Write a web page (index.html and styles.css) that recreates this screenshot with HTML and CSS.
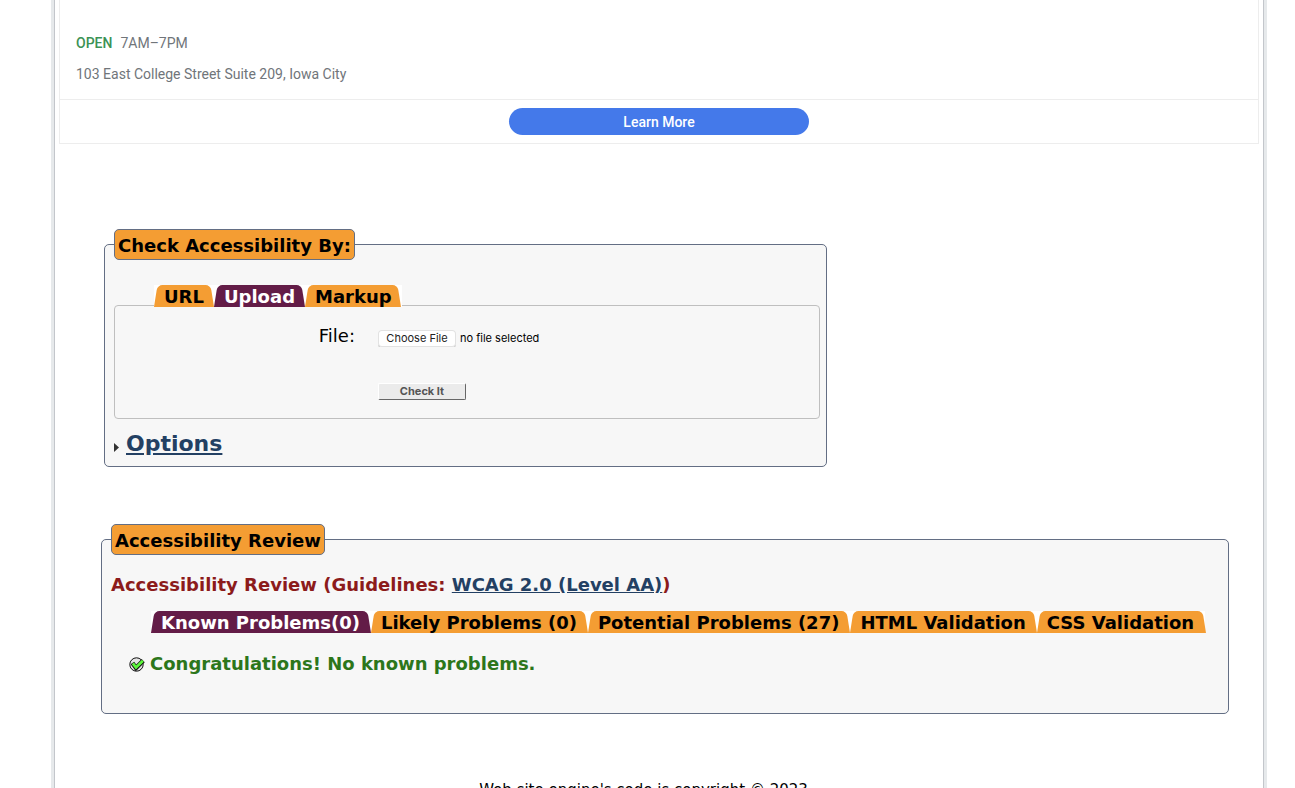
FILE: index.html
```html
<!DOCTYPE html>
<html lang="en">
<head>
<meta charset="utf-8">
<title>Web Accessibility Checker</title>
<link rel="stylesheet" href="styles.css">
</head>
<body>
<div class="sheet">
  <aside class="promo">
    <div class="promo-info">
      <p class="promo-hours"><strong class="open">OPEN</strong><span>7AM–7PM</span></p>
      <p class="promo-address">103 East College Street Suite 209, Iowa City</p>
    </div>
    <div class="promo-action">
      <a class="learn" href="#">Learn More</a>
    </div>
  </aside>

  <main>
    <form class="check">
      <fieldset class="group">
        <legend class="group-title">Check Accessibility By:</legend>
        <div class="tabs check-tabs">
          <button type="button" class="tab">URL</button>
          <button type="button" class="tab active">Upload</button>
          <button type="button" class="tab">Markup</button>
        </div>
        <div class="panel">
          <label class="file-label" for="file">File:</label>
          <div class="file-row">
            <input id="file" class="file" type="file">
            <span class="file-name">no file selected</span>
          </div>
          <button type="button" class="submit" disabled>Check It</button>
        </div>
        <div class="options">
          <svg class="arrow" viewBox="0 0 5 9" aria-hidden="true"><path d="M0 0 5 4.5 0 9z" fill="#333"/></svg>
          <a href="#">Options</a>
        </div>
      </fieldset>
    </form>

    <section class="review">
      <fieldset class="group">
        <legend class="group-title">Accessibility Review</legend>
        <h2 class="guidelines">Accessibility Review (Guidelines: <a href="#">WCAG 2.0 (Level AA)</a>)</h2>
        <div class="tabs review-tabs">
          <button type="button" class="tab active">Known Problems(0)</button>
          <button type="button" class="tab">Likely Problems (0)</button>
          <button type="button" class="tab">Potential Problems (27)</button>
          <button type="button" class="tab">HTML Validation</button>
          <button type="button" class="tab">CSS Validation</button>
        </div>
        <p class="result">
          <svg class="tick" viewBox="0 0 16 15" aria-hidden="true">
            <circle cx="7.5" cy="7.5" r="6.7" fill="#e4e4e4" stroke="#111" stroke-width="1"/>
            <path d="M3.4 6 7 10.8 14.2 3.6" fill="none" stroke="#111" stroke-width="4.4"/>
            <path d="M3.8 6.4 7 10.4 13.9 3.8" fill="none" stroke="#5cf53c" stroke-width="2.8"/>
          </svg>
          Congratulations! No known problems.
        </p>
      </fieldset>
    </section>
  </main>

  <footer class="footer">Web site engine's code is copyright © 2023</footer>
</div>
</body>
</html>
```
FILE: styles.css
```css
* { box-sizing: border-box; }

body {
  margin: 0;
  background: #fff;
  color: #000;
  font: 18px/22px Verdana, "DejaVu Sans", sans-serif;
}

p, h2 { margin: 0; }

a { color: #234063; }

.sheet {
  margin: 0 31px 0 54px;
  min-height: 100vh;
  border: solid #c3c6cb;
  border-width: 0 1px;
  box-shadow: 0 0 0 3px #e6e9eb;
}

.promo {
  margin: 0 4px;
  border: 1px solid #ededed;
  border-top: 0;
  color: #70757a;
  font: 14px/16px Roboto, sans-serif;
}

.promo-info {
  display: flex;
  flex-direction: column;
  gap: 15px;
  padding: 35px 16px 17px;
}

.promo-hours { display: flex; gap: 8px; }

.open { color: #3c9255; font-weight: 500; }

.promo-action {
  display: flex;
  justify-content: center;
  padding: 8px;
  border-top: 1px solid #ededed;
}

.learn {
  width: 300px;
  padding-top: 1px;
  border-radius: 14px;
  background: #4479ea;
  color: #fff;
  font-weight: 500;
  line-height: 26px;
  text-align: center;
  text-decoration: none;
}

.check { max-width: 772px; margin-top: 85px; padding-left: 49px; }

.group {
  min-width: 0;
  margin: 0;
  padding: 0 6px 0 9px;
  border: 1px solid #636e84;
  border-radius: 5px;
  background: #f7f7f7;
}

.group-title {
  padding: 5px 3px 2px;
  border: 1px solid #636e84;
  border-radius: 5px;
  background: #f49d33;
  font-weight: bold;
}

.tabs { display: flex; }

.tab {
  position: relative;
  z-index: 0;
  height: 22px;
  padding: 2px 10px 0;
  border: 0;
  background: #fff;
  color: #000;
  font: bold 18px/20px Verdana, "DejaVu Sans", sans-serif;
  white-space: nowrap;
  --fill: #f49d33;
}

.tab.active { color: #fff; --fill: #631c47; }

.tab::before,
.tab::after {
  content: "";
  position: absolute;
  z-index: -1;
  top: 0;
  bottom: 0;
  width: 52%;
  background: var(--fill);
}

.tab::before {
  left: 0;
  border-top-left-radius: 5px;
  transform: skewX(-9deg);
  transform-origin: bottom;
}

.tab::after {
  right: 0;
  border-top-right-radius: 5px;
  transform: skewX(9deg);
  transform-origin: bottom;
}

.check-tabs { margin: 25px 0 -2px 40px; position: relative; }

.panel {
  display: grid;
  grid-template-columns: 240px 1fr;
  column-gap: 23px;
  row-gap: 36px;
  align-items: center;
  padding: 18px 0;
  border: 1px solid #bfbfbf;
  border-radius: 4px;
}

.file-label { text-align: right; }

.file-row {
  display: flex;
  align-items: center;
  gap: 4px;
  padding-top: 5px;
  font: 11px/18px Inter, sans-serif;
}

.file {
  width: 78px;
  height: 18px;
  overflow: hidden;
  color: transparent;
  font: inherit;
}

.file::file-selector-button {
  width: 78px;
  height: 17px;
  margin: 0;
  padding: 0;
  border: 0;
  border-radius: 4px;
  background: #fff;
  box-shadow: inset 0 0 0 1px #e2e2e2, 0 1px 0 #bbb;
  color: #222;
  font: inherit;
  line-height: 17px;
}

.submit {
  grid-column: 2;
  width: 88px;
  height: 17px;
  padding: 0;
  border: solid;
  border-width: 1px;
  border-color: #fff #666 #666 #fff;
  border-radius: 2px;
  background: #ebebeb;
  color: #555;
  font: bold 11px/15px Inter, sans-serif;
}

.options {
  display: flex;
  align-items: center;
  gap: 7px;
  padding: 11px 0 8px;
  font-size: 22px;
  line-height: 28px;
  font-weight: bold;
}

.arrow { width: 5px; height: 9px; margin-top: 6px; }

.review { margin: 57px 34px 0 46px; }

.guidelines {
  padding-top: 19px;
  color: #8c1b1b;
  font-size: 18px;
}

.review-tabs { margin: 15px 0 0 40px; }

.review-tabs .tab { padding: 2px 11px 0 10px; }

.result {
  display: flex;
  align-items: center;
  gap: 5px;
  padding: 20px 0 38px 18px;
  color: #2c761b;
  font-weight: bold;
}

.tick { width: 16px; height: 15px; }

.footer {
  height: 22px;
  margin-top: 65px;
  padding-right: 31px;
  font-size: 15px;
  text-align: center;
}
```
